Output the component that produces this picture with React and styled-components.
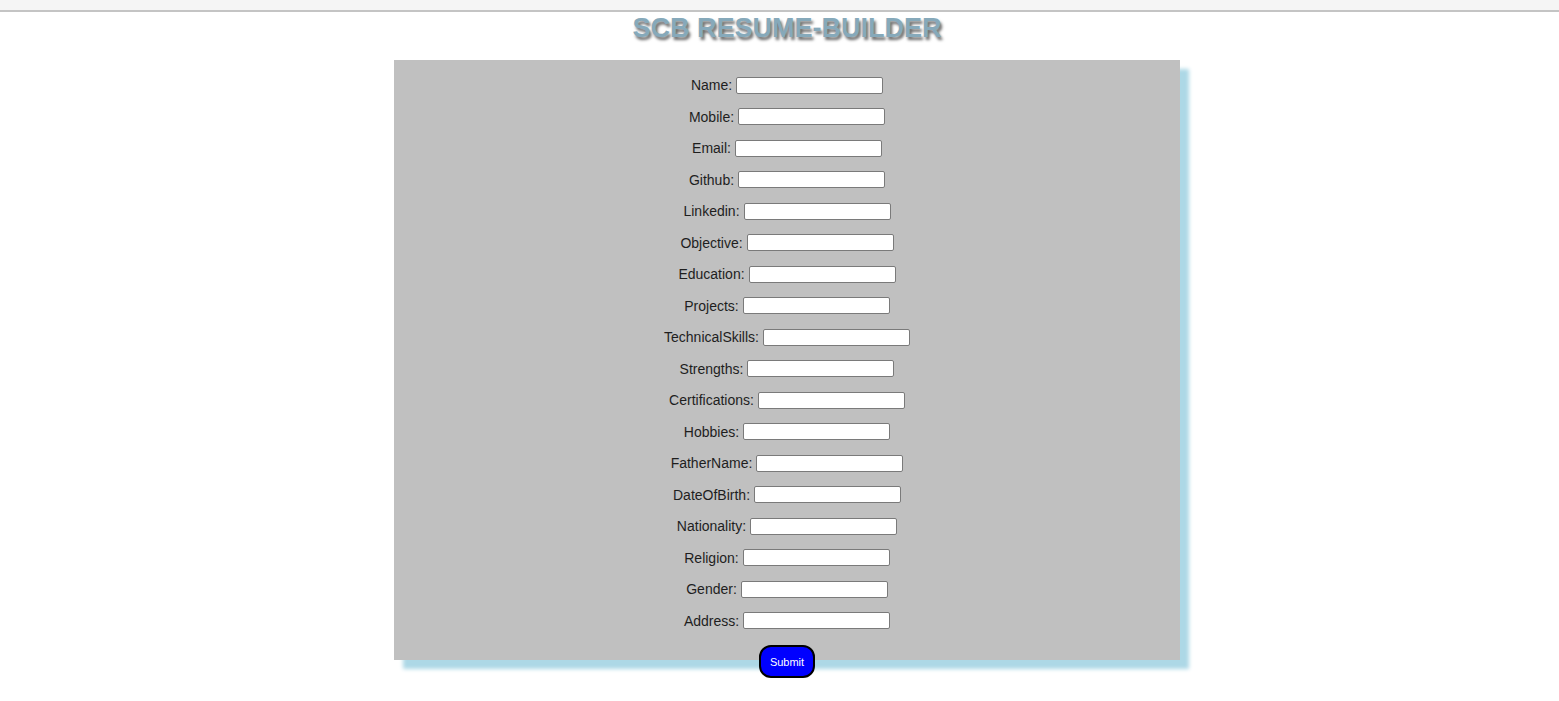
import styled, { createGlobalStyle } from "styled-components";

const GlobalStyle = createGlobalStyle`
  html, body {
    margin: 0;
    padding: 0;
    background: #ffffff;
  }
  body {
    font-family: "Liberation Sans", Arial, sans-serif;
  }
`;

const TopBar = styled.div`
  height: 10px;
  background: #f5f5f5;
  border-bottom: 2px solid #c4c4c4;
`;

const Page = styled.main`
  width: 786px;
  margin-left: 394px;
  padding-bottom: 30px;
`;

const Title = styled.h1`
  margin: 0;
  padding-top: 1px;
  height: 47px;
  text-align: center;
  font-size: 27px;
  line-height: 30px;
  font-weight: bold;
  color: #86a9ba;
  text-shadow: 2px 3px 3px #6a6a6a;
`;

const Panel = styled.form`
  box-sizing: border-box;
  height: 600px;
  padding-top: 15px;
  background: #c0c0c0;
  box-shadow: 9px 9px 4px #add8e6;
  display: flex;
  flex-direction: column;
  align-items: center;
  gap: 11.5px;
`;

const Row = styled.div`
  flex-shrink: 0;
  height: 20px;
  display: flex;
  align-items: center;
  justify-content: center;
  gap: 4px;
  font-size: 14px;
  color: #1e1e1e;
`;

const Input = styled.input`
  box-sizing: border-box;
  width: 147px;
  height: 17px;
  margin: 0;
  padding: 1px 2px;
  border: 1px solid #7a7a7a;
  border-radius: 2px;
  background: #fff;
  font-size: 13px;
`;

const SubmitButton = styled.button`
  flex-shrink: 0;
  margin-top: 3px;
  width: 56px;
  height: 33px;
  padding: 0;
  border: 2px solid #000;
  border-radius: 12px;
  background: #0000ff;
  color: #fff;
  font-family: "Liberation Sans", Arial, sans-serif;
  font-size: 11px;
  cursor: pointer;
`;

const fields = [
  "Name",
  "Mobile",
  "Email",
  "Github",
  "Linkedin",
  "Objective",
  "Education",
  "Projects",
  "TechnicalSkills",
  "Strengths",
  "Certifications",
  "Hobbies",
  "FatherName",
  "DateOfBirth",
  "Nationality",
  "Religion",
  "Gender",
  "Address",
];

export default function App() {
  return (
    <>
      <GlobalStyle />
      <TopBar />
      <Page>
        <Title>SCB RESUME-BUILDER</Title>
        <Panel onSubmit={(e) => e.preventDefault()}>
          {fields.map((field) => (
            <Row key={field}>
              <label htmlFor={field}>{field}:</label>
              <Input id={field} type="text" />
            </Row>
          ))}
          <SubmitButton type="submit">Submit</SubmitButton>
        </Panel>
      </Page>
    </>
  );
}
